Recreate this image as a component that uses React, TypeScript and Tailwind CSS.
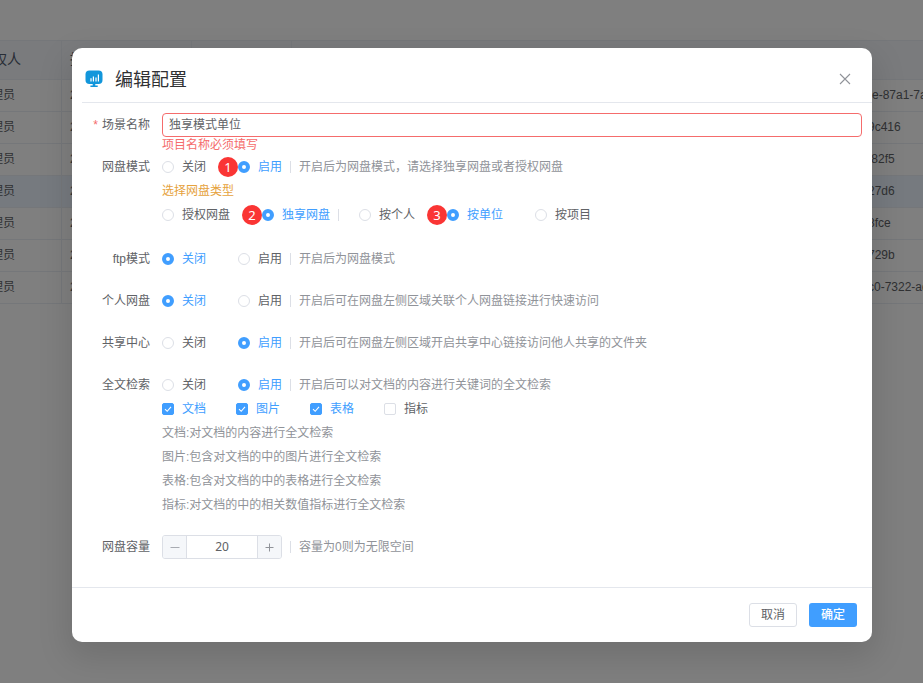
import React, { useState } from 'react';

const fileIds = ['-e-87a1-7ad2', '9c416', 'f82f5', '27d6', '8fce', '729b', 'c0-7322-ad1'];

const BackgroundTable = () => (
  <div className="overflow-hidden pt-10" aria-hidden="true">
    <table className="-ml-[29px] w-[1089px] table-fixed border-separate border-spacing-0 border-t border-[#ebeef5] text-left text-xs text-[#606266]">
      <thead>
        <tr className="h-[39px] bg-[#f5f7fa] text-sm text-[#515a6e]">
          <th className="w-[91px] border-r border-b border-[#ebeef5] px-2 pb-0.5 font-normal">授权人</th>
          <th className="w-[130px] border-r border-b border-[#ebeef5] px-2 pb-0.5 font-normal">授权时间</th>
          <th className="w-[100px] border-r border-b border-[#ebeef5] px-2 pb-0.5 font-normal">状态</th>
          <th className="border-b border-[#ebeef5] px-2 pb-0.5 font-normal">名称</th>
          <th className="w-[200px] border-b border-[#ebeef5] px-2 pb-0.5 font-normal" />
        </tr>
      </thead>
      <tbody>
        {fileIds.map((id, index) => (
          <tr key={id} className={index === 3 ? 'h-8 bg-[#ecf5ff]' : 'h-8'}>
            <td className="border-r border-b border-[#ebeef5] px-2 pb-0.5">管理员</td>
            <td className="border-r border-b border-[#ebeef5] px-2 pb-0.5">2024</td>
            <td className="border-r border-b border-[#ebeef5] px-2 pb-0.5" />
            <td className="border-b border-[#ebeef5] px-2 pb-0.5" />
            <td className="border-b border-[#ebeef5] px-2 pb-0.5 whitespace-nowrap">{id}</td>
          </tr>
        ))}
      </tbody>
    </table>
  </div>
);

const Badge = ({ children }: { children: React.ReactNode }) => (
  <span className="absolute top-0.5 -left-5 flex size-5 items-center justify-center rounded-full bg-[#fa3534] pb-px font-['Noto_Sans',sans-serif] text-[13px] leading-5 text-white">
    {children}
  </span>
);

const Divider = () => <span className="mx-2 h-3 w-px shrink-0 bg-[#dcdfe6]" />;

const Note = ({ children }: { children: React.ReactNode }) => (
  <span className="text-[#909399]">{children}</span>
);

type RadioProps = {
  name: string;
  label: string;
  checked?: boolean;
  badge?: string;
};

const Radio = ({ name, label, checked, badge }: RadioProps) => (
  <label className="relative flex h-6 cursor-pointer items-center gap-2">
    {badge && <Badge>{badge}</Badge>}
    <input
      type="radio"
      name={name}
      defaultChecked={checked}
      className="peer relative size-3 appearance-none rounded-full border border-[#dcdfe6] bg-white checked:border-4 checked:border-[#409eff]"
    />
    <span className="peer-checked:text-[#409eff]">{label}</span>
  </label>
);

const Checkbox = ({ label, checked }: { label: string; checked?: boolean }) => (
  <label className="group flex h-6 cursor-pointer items-center gap-2">
    <span className="grid size-3 place-items-center">
      <input
        type="checkbox"
        defaultChecked={checked}
        className="peer col-start-1 row-start-1 size-3 appearance-none rounded-xs border border-[#dcdfe6] bg-white checked:border-[#409eff] checked:bg-[#409eff]"
      />
      <svg
        viewBox="0 0 12 12"
        className="pointer-events-none col-start-1 row-start-1 hidden size-3 peer-checked:block"
        fill="none"
        stroke="#fff"
        strokeWidth="1.1"
      >
        <path d="M3 6.2 5.2 8.3 9 3.9" />
      </svg>
    </span>
    <span className="group-has-checked:text-[#409eff]">{label}</span>
  </label>
);

type FormItemProps = {
  label: string;
  htmlFor?: string;
  required?: boolean;
  children: React.ReactNode;
};

const FormItem = ({ label, htmlFor, required, children }: FormItemProps) => (
  <div className="flex">
    <label htmlFor={htmlFor} className="flex h-6 w-20 shrink-0 justify-end gap-1 pr-3">
      {required && <span className="text-[#f56c6c]">*</span>}
      <span>{label}</span>
    </label>
    <div className="relative min-w-0 flex-1">{children}</div>
  </div>
);

type SwitchRowProps = {
  name: string;
  enabled?: boolean;
  badge?: string;
  note: string;
};

const SwitchRow = ({ name, enabled, badge, note }: SwitchRowProps) => (
  <div className="flex items-center">
    <div className="flex gap-8">
      <Radio name={name} label="关闭" checked={!enabled} />
      <Radio name={name} label="启用" checked={enabled} badge={badge} />
    </div>
    <Divider />
    <Note>{note}</Note>
  </div>
);

const App = () => {
  const [capacity, setCapacity] = useState(20);

  return (
    <div className="relative min-h-screen overflow-hidden bg-white font-['Liberation_Sans','Noto_Sans_CJK_SC',sans-serif]">
      <BackgroundTable />

      {/* Dialog */}
      <div className="absolute inset-0 bg-black/50 pt-12 pr-[51px] pl-[72px]">
        <div
          role="dialog"
          aria-labelledby="dialog-title"
          className="rounded-[10px] bg-white text-xs leading-6 text-[#606266] shadow-[0_12px_32px_4px_rgba(0,0,0,0.12)]"
        >
          <header className="ml-[10px] flex h-[55px] items-center border-b border-[#e4e7ed] pt-2 pr-[19px] pl-[3px]">
            <svg viewBox="0 0 18 18" className="size-[18px]">
              <rect x="0.5" y="0.5" width="17" height="13.5" rx="4" fill="#1296db" />
              <path d="M7.7 13.5h2.6v2.1h2.4v1.4H5.4v-1.4h2.3z" fill="#1296db" />
              <path d="M6 8.2v3.2M8.4 6.4v5M11 7.4v4M13.4 4.4v7" stroke="#fff" strokeWidth="1.2" />
            </svg>
            <h2 id="dialog-title" className="ml-3 flex-1 pt-0.5 text-lg leading-6 font-normal text-[#303133]">
              编辑配置
            </h2>
            <button type="button" aria-label="关闭" className="flex size-4 items-center justify-center">
              <svg viewBox="0 0 12 12" className="size-3" stroke="#909399" strokeWidth="1.1">
                <path d="M1 1l10 10M11 1L1 11" />
              </svg>
            </button>
          </header>

          <form className="flex flex-col gap-[18px] px-[10px] pt-[10px] pb-7">
            <FormItem label="场景名称" htmlFor="scene-name" required>
              <input
                id="scene-name"
                type="text"
                defaultValue="独享模式单位"
                className="block h-6 w-full rounded border border-[#f56c6c] px-1.5 outline-none"
              />
              <p className="absolute top-full left-0 leading-4 text-[#f56c6c]">项目名称必须填写</p>
            </FormItem>

            <FormItem label="网盘模式">
              <SwitchRow name="disk-mode" enabled badge="1" note="开启后为网盘模式，请选择独享网盘或者授权网盘" />
              <p className="text-[#e6a23c]">选择网盘类型</p>
              <div className="flex items-center pb-0.5">
                <div className="flex gap-8">
                  <Radio name="disk-type" label="授权网盘" />
                  <Radio name="disk-type" label="独享网盘" checked badge="2" />
                </div>
                <Divider />
                <div className="ml-3 flex gap-8">
                  <Radio name="disk-owner" label="按个人" />
                  <Radio name="disk-owner" label="按单位" checked badge="3" />
                  <Radio name="disk-owner" label="按项目" />
                </div>
              </div>
            </FormItem>

            <FormItem label="ftp模式">
              <SwitchRow name="ftp" note="开启后为网盘模式" />
            </FormItem>

            <FormItem label="个人网盘">
              <SwitchRow name="personal" note="开启后可在网盘左侧区域关联个人网盘链接进行快速访问" />
            </FormItem>

            <FormItem label="共享中心">
              <SwitchRow name="share" enabled note="开启后可在网盘左侧区域开启共享中心链接访问他人共享的文件夹" />
            </FormItem>

            <FormItem label="全文检索">
              <SwitchRow name="search" enabled note="开启后可以对文档的内容进行关键词的全文检索" />
              <div className="flex gap-[30px]">
                <Checkbox label="文档" checked />
                <Checkbox label="图片" checked />
                <Checkbox label="表格" checked />
                <Checkbox label="指标" />
              </div>
              <div className="text-[#909399]">
                <p>文档:对文档的内容进行全文检索</p>
                <p>图片:包含对文档的中的图片进行全文检索</p>
                <p>表格:包含对文档的中的表格进行全文检索</p>
                <p>指标:对文档的中的相关数值指标进行全文检索</p>
              </div>
            </FormItem>

            <FormItem label="网盘容量" htmlFor="capacity">
              <div className="flex items-center">
                <div className="flex h-6 w-[120px] overflow-hidden rounded-[3px] border border-[#dcdfe6]">
                  <button
                    type="button"
                    aria-label="减少"
                    onClick={() => setCapacity(Math.max(0, capacity - 1))}
                    className="flex w-6 shrink-0 items-center justify-center border-r border-[#dcdfe6] bg-[#f5f7fa]"
                  >
                    <svg viewBox="0 0 10 10" className="size-[10px]" stroke="#a8abb2">
                      <path d="M0.5 5.5h9" />
                    </svg>
                  </button>
                  <input
                    id="capacity"
                    type="text"
                    value={capacity}
                    onChange={(e) => setCapacity(Number(e.target.value) || 0)}
                    className="w-0 min-w-0 flex-1 text-center font-['Noto_Sans',sans-serif] outline-none"
                  />
                  <button
                    type="button"
                    aria-label="增加"
                    onClick={() => setCapacity(capacity + 1)}
                    className="flex w-6 shrink-0 items-center justify-center border-l border-[#dcdfe6] bg-[#f5f7fa]"
                  >
                    <svg viewBox="0 0 9 9" className="size-[9px]" stroke="#909399">
                      <path d="M0.5 4.5h8M4.5 0.5v8" />
                    </svg>
                  </button>
                </div>
                <Divider />
                <Note>容量为0则为无限空间</Note>
              </div>
            </FormItem>
          </form>

          <footer className="flex justify-end gap-3 border-t border-[#e4e7ed] p-[15px]">
            <button type="button" className="h-6 w-12 rounded-[3px] border border-[#dcdfe6] bg-white leading-[22px]">
              取消
            </button>
            <button type="button" className="h-6 w-12 rounded-[3px] bg-[#409eff] font-medium text-white">
              确定
            </button>
          </footer>
        </div>
      </div>
    </div>
  );
};

export default App;
